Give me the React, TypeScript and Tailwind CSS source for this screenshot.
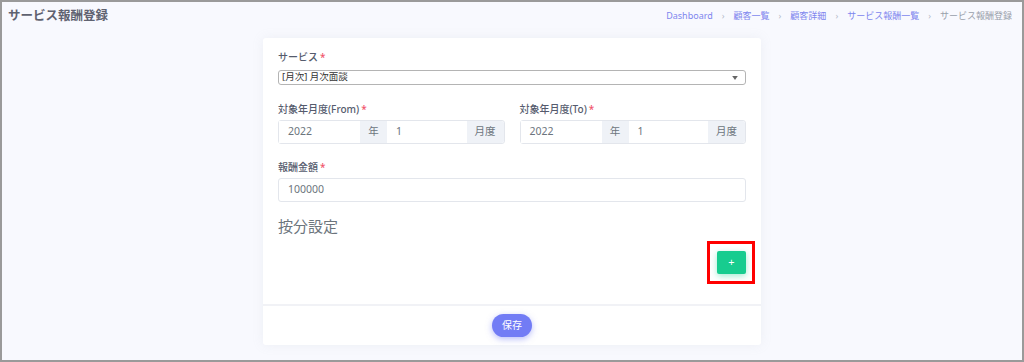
import React from "react";

const font = { fontFamily: '"Noto Sans", "Noto Sans CJK JP", sans-serif' };

const Required = () => <span className="ml-[2px] text-[#f1556c]">*</span>;

const YearMonth = ({ label }: { label: string }) => (
  <div className="flex flex-col">
    <div className="mb-[3px] text-[10px] font-medium text-[#555b6d]">
      {label}
      <Required />
    </div>
    <div className="flex h-[24px] rounded-[3px] border border-[#e3e6ec] text-[10.5px]">
      <div className="flex w-[81px] items-center bg-white pl-[9px] text-[#6c757d]">2022</div>
      <div className="flex w-[27px] items-center justify-center bg-[#eff2f7] text-[#6c757d]">年</div>
      <div className="flex flex-1 items-center bg-white pl-[9px] text-[#6c757d]">1</div>
      <div className="flex w-[37px] items-center justify-center rounded-r-[3px] bg-[#eff2f7] text-[#6c757d]">月度</div>
    </div>
  </div>
);

export default function App() {
  return (
    <div style={font} className="h-[362px] w-[1024px] overflow-hidden border-2 border-[#9a9a9a] bg-[#f8f9fe]">
      {/* Header */}
      <div className="flex h-[34px] items-start justify-between px-[6px] pt-[5px]">
        <h1 className="text-[12.5px] font-bold text-[#5f6270]">サービス報酬登録</h1>
        <div className="mr-[4px] flex items-center gap-[7px] pt-[2px] text-[9px]">
          <span className="text-[#7e86ee]">Dashboard</span>
          <span className="px-[2px] text-[#b5b9c9]">›</span>
          <span className="text-[#7e86ee]">顧客一覧</span>
          <span className="px-[2px] text-[#b5b9c9]">›</span>
          <span className="text-[#7e86ee]">顧客詳細</span>
          <span className="px-[2px] text-[#b5b9c9]">›</span>
          <span className="text-[#7e86ee]">サービス報酬一覧</span>
          <span className="px-[2px] text-[#b5b9c9]">›</span>
          <span className="text-[#98a0ab]">サービス報酬登録</span>
        </div>
      </div>

      {/* Card */}
      <div className="ml-[261px] mt-[2px] w-[498px] rounded-[3px] bg-white shadow-[0_0_12px_rgba(154,161,171,0.12)]">
        <div className="px-[15px] pb-[30px] pt-[12px]">
          <div className="mb-[5px] text-[10px] font-medium text-[#555b6d]">
            サービス
            <Required />
          </div>
          <div className="flex h-[15px] items-center justify-between rounded-[3px] border border-[#b4b4b4] bg-white px-[3px] text-[9.5px] text-[#333]">
            <span>[月次] 月次面談</span>
            <svg width="6" height="4" viewBox="0 0 7 5" className="mr-[4px]">
              <path d="M0 0h7L3.5 5z" fill="#666" />
            </svg>
          </div>

          <div className="mt-[17px] grid grid-cols-2 gap-[15px]">
            <YearMonth label="対象年月度(From)" />
            <YearMonth label="対象年月度(To)" />
          </div>

          <div className="mt-[16px] mb-[3px] text-[10px] font-medium text-[#555b6d]">
            報酬金額
            <Required />
          </div>
          <div className="flex h-[24px] items-center rounded-[3px] border border-[#e3e6ec] pl-[9px] text-[10.5px] text-[#6c757d]">
            100000
          </div>

          <h2 className="mt-[13px] text-[15px] text-[#6c757d]">按分設定</h2>

          <div className="mt-[13px] flex justify-end">
            <div className="relative">
              <button className="flex h-[23px] w-[29px] items-center justify-center rounded-[2px] bg-[#17cc8f] text-[11px] text-white shadow-[0_2px_6px_rgba(23,204,143,0.4)]">
                +
              </button>
              <div className="pointer-events-none absolute -left-[10px] -top-[10px] h-[43px] w-[48px] border-[3px] border-[#ff0000]" />
            </div>
          </div>
        </div>

        <div className="flex h-[41px] items-center justify-center border-t-2 border-[#f1f2f6]">
          <button className="h-[23px] rounded-full bg-[#727cf5] px-[10px] text-[10px] text-white shadow-[0_2px_6px_rgba(114,124,245,0.5)]">
            保存
          </button>
        </div>
      </div>
    </div>
  );
}
